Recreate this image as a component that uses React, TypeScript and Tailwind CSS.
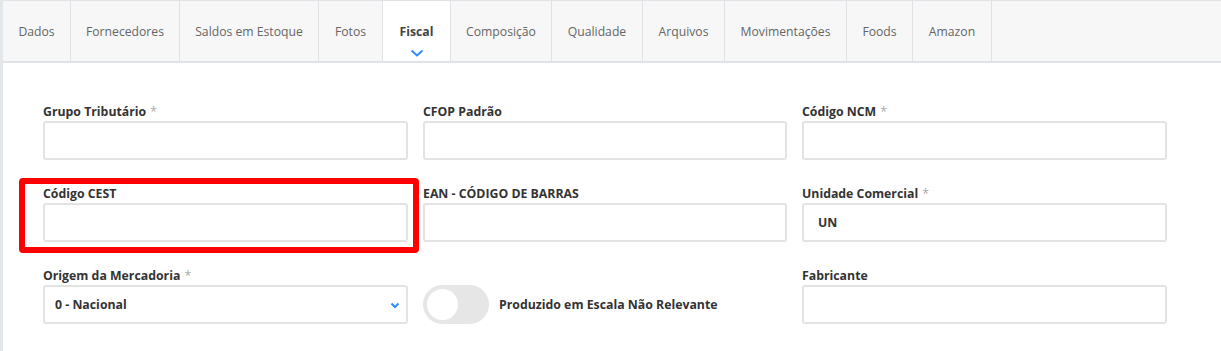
import React from 'react';

const tabs = [
  { label: 'Dados', w: 68 },
  { label: 'Fornecedores', w: 109 },
  { label: 'Saldos em Estoque', w: 139 },
  { label: 'Fotos', w: 64 },
  { label: 'Fiscal', w: 68, active: true },
  { label: 'Composição', w: 101 },
  { label: 'Qualidade', w: 91 },
  { label: 'Arquivos', w: 82 },
  { label: 'Movimentações', w: 122 },
  { label: 'Foods', w: 66 },
  { label: 'Amazon', w: 79 },
];

function Label({ text, required }: { text: string; required?: boolean }) {
  return (
    <label className="block h-[17px] mb-[2px] pt-[1px] text-[12.3px] leading-[17px] font-bold text-[#333]">
      {text}
      {required && <span className="ml-1 font-normal text-[#aaa]">*</span>}
    </label>
  );
}

function Field({ label, required, value, padLeft }: { label: string; required?: boolean; value?: string; padLeft?: boolean }) {
  return (
    <div>
      <Label text={label} required={required} />
      <div
        className={`flex h-[39px] items-center rounded-[3px] border-2 border-[#e3e3e3] bg-white pt-[1px] text-[12.3px] font-bold text-[#333] ${padLeft ? 'pl-[14px]' : 'pl-[10px]'}`}
      >
        {value}
      </div>
    </div>
  );
}

export default function App() {
  return (
    <div className="min-h-screen border-l-[3px] border-[#e4e7ea] bg-white" style={{ fontFamily: '"Open Sans", sans-serif' }}>
      <div className="flex h-[63px] border-t border-b-2 border-[#dfe3e7] bg-[#f7f7f7]">
        {tabs.map((t) => (
          <div
            key={t.label}
            className={`relative flex shrink-0 items-center justify-center border-r border-[#e0e3e6] text-[12.2px] ${
              t.active ? 'bg-white font-bold text-[#444]' : 'text-[#666]'
            }`}
            style={{ width: t.w }}
          >
            <span className="mt-[2px]">{t.label}</span>
            {t.active && (
              <svg className="absolute bottom-[4px] left-1/2 -translate-x-1/2" width="14" height="8" viewBox="0 0 14 8" fill="none">
                <polyline points="1.5,1.5 7,6.5 12.5,1.5" stroke="#2f8cff" strokeWidth="2" />
              </svg>
            )}
          </div>
        ))}
      </div>

      <div className="pl-[40px] pt-[39px]">
        <div className="grid grid-cols-[365px_364px_365px] gap-x-[15px] gap-y-[24px]">
          <Field label="Grupo Tributário" required />
          <Field label="CFOP Padrão" />
          <Field label="Código NCM" required />

          <div className="relative">
            <Field label="Código CEST" />
            <div className="pointer-events-none absolute -left-[24px] -top-[6px] h-[75px] w-[400px] rounded-[4px] border-[6px] border-[#ff0000]" />
          </div>
          <Field label="EAN - CÓDIGO DE BARRAS" />
          <Field label="Unidade Comercial" required value="UN" padLeft />

          <div>
            <Label text="Origem da Mercadoria" required />
            <div className="flex h-[39px] items-center justify-between rounded-[3px] border-2 border-[#e3e3e3] bg-white pl-[10px] pr-[6px] pt-[1px] text-[12.3px] font-bold text-[#333]">
              <span>0 - Nacional</span>
              <svg width="10" height="7" viewBox="0 0 10 7" fill="none">
                <polyline points="1.5,1.5 5,5 8.5,1.5" stroke="#2f8cff" strokeWidth="2" />
              </svg>
            </div>
          </div>
          <div>
            <div className="h-[17px] mb-[2px]" />
            <div className="flex h-[39px] items-center gap-[10px]">
              <div className="flex h-[39px] w-[66px] items-center rounded-full bg-[#e6e6e6] pl-[4px]">
                <div className="h-[31px] w-[31px] rounded-full bg-white" />
              </div>
              <span className="pt-[1px] text-[12.3px] font-bold text-[#333]">Produzido em Escala Não Relevante</span>
            </div>
          </div>
          <Field label="Fabricante" />
        </div>
      </div>
    </div>
  );
}
